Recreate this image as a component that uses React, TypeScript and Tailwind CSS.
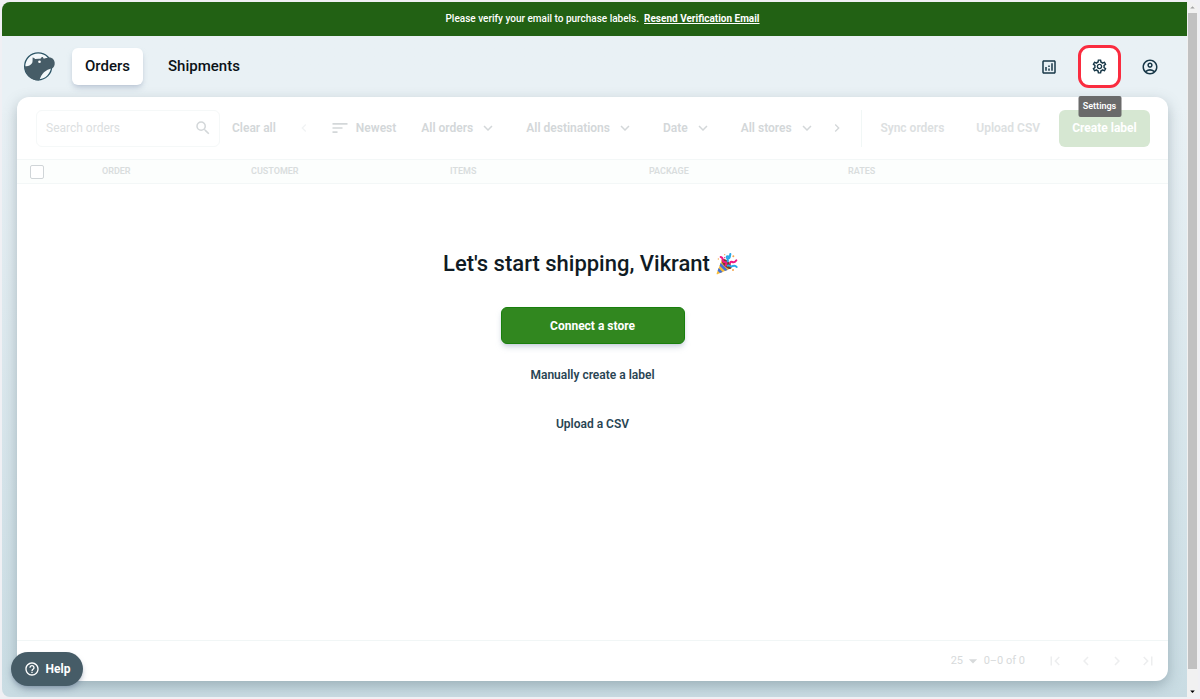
import type { ReactNode } from "react";
import {
  MdArrowDropDown,
  MdArrowDropUp,
  MdChevronLeft,
  MdChevronRight,
  MdFirstPage,
  MdHelpOutline,
  MdKeyboardArrowDown,
  MdLastPage,
  MdOutlineAccountCircle,
  MdOutlineAnalytics,
  MdOutlineSettings,
  MdSearch,
  MdSort,
} from "react-icons/md";

const filters = ["All orders", "All destinations", "Date", "All stores"];

const columns = [
  { label: "Order", width: "w-[149px]" },
  { label: "Customer", width: "w-[199px]" },
  { label: "Items", width: "w-[199px]" },
  { label: "Package", width: "w-[199px]" },
  { label: "Rates", width: "" },
];

function HippoLogo() {
  return (
    <svg viewBox="0 0 94 90" className="h-[30px] w-[31px]" aria-hidden="true">
      <circle cx="43" cy="43" r="41" fill="#f3f8fa" stroke="#2c5566" strokeWidth="4" />
      <path
        d="M2 43C8 43 17 42 23 35C27 31 26 25 26 16Q31 16 34 21Q43 19 50 20Q52 14 57 15L60 20C68 18 75 15 82 17C91 20 94 29 93 37C92 46 86 51 78 51C69 54 62 59 56 66C50 73 49 80 46 86C23 87 2 69 2 43Z"
        fill="#465c67"
      />
      <circle cx="47" cy="29" r="4" fill="#fff" />
    </svg>
  );
}

function PartyPopper() {
  return (
    <svg viewBox="0 0 66 66" className="h-[22px] w-[22px]" aria-hidden="true">
      <path d="M18 20L46 46L4 64Q1 65 2 61Z" fill="#fbbd37" />
      <path d="M14 29L35 51L27 54L11 38ZM8 45L20 57L12 60L5 53Z" fill="#4272d8" />
      <ellipse cx="32" cy="33" rx="9" ry="19" transform="rotate(-45 32 33)" fill="#713d2c" />
      <g fill="none" strokeWidth="6" strokeLinecap="round">
        <path d="M14 12Q20 13 20 20T27 27T29 38" stroke="#ee1982" />
        <path d="M35 25C39 20 29 15 33 10Q38 8 39 14T43 3" stroke="#2aa8e8" />
        <path d="M35 38C43 34 42 44 50 39Q58 36 62 42" stroke="#2aa8e8" />
        <path d="M42 31Q43 24 49 27T61 22" stroke="#ee1982" />
      </g>
      <g fill="#f5a64b">
        <circle cx="26" cy="5" r="2" />
        <circle cx="7" cy="18" r="2" />
        <circle cx="52" cy="10" r="3" />
        <circle cx="51" cy="51" r="3" />
      </g>
      <circle cx="26" cy="14" r="2" fill="#ee1982" />
    </svg>
  );
}

function IconButton({ label, children }: { label: string; children: ReactNode }) {
  return (
    <button type="button" aria-label={label} className="flex size-9 items-center justify-center">
      {children}
    </button>
  );
}

function Header() {
  return (
    <header className="flex h-[61px] shrink-0 items-center pr-[19px] pl-[22px]">
      <HippoLogo />
      <nav className="ml-[17px] flex items-center text-[15px] font-medium text-[#0b1218]">
        <a href="#orders" className="flex h-[37px] items-center rounded-md bg-white px-[13px] shadow-md shadow-slate-400/40">
          Orders
        </a>
        <a href="#shipments" className="ml-[25px]">
          Shipments
        </a>
      </nav>
      <div className="ml-auto flex items-center gap-[11px] text-[#173747]">
        <IconButton label="Analytics">
          <MdOutlineAnalytics className="size-[18px]" />
        </IconButton>
        <div className="relative">
          <button
            type="button"
            aria-label="Settings"
            className="flex size-[43px] items-center justify-center rounded-[11px] border-3 border-[#fa2c3f] bg-white"
          >
            <MdOutlineSettings className="size-[17px]" />
          </button>
          <span
            role="tooltip"
            className="absolute top-full left-1/2 z-10 mt-2 flex h-[21px] w-[43px] -translate-x-1/2 items-center justify-center rounded-xs bg-[#6a6a6a] text-[9px] font-semibold text-white"
          >
            Settings
          </span>
        </div>
        <IconButton label="Account">
          <MdOutlineAccountCircle className="size-[18px]" />
        </IconButton>
      </div>
    </header>
  );
}

function Toolbar() {
  return (
    <div className="flex h-[62px] shrink-0 items-center pr-[18px] pl-[19px] text-xs font-semibold whitespace-nowrap text-[#d3d7d9]">
      <label className="flex h-[37px] w-[184px] items-center rounded-md border border-[#f5f8f8] pr-[7px] pl-[9px]">
        <input
          type="text"
          aria-label="Search orders"
          placeholder="Search orders"
          className="min-w-0 flex-1 font-normal outline-none placeholder:text-[#dce0e1]"
        />
        <MdSearch className="size-[18px]" />
      </label>
      <button type="button" className="ml-3">Clear all</button>
      <MdChevronLeft className="ml-5 size-4 text-[#f1f3f4]" />
      <button type="button" className="ml-[18px] flex items-center gap-[6px]">
        <MdSort className="size-5" />
        Newest
      </button>
      <div className="ml-[25px] flex items-center gap-[29px]">
        {filters.map((filter) => (
          <button key={filter} type="button" className="flex items-center gap-[6px]">
            {filter}
            <MdKeyboardArrowDown className="size-[18px]" />
          </button>
        ))}
      </div>
      <MdChevronRight className="ml-[13px] size-4" />
      <div className="ml-auto flex h-[37px] items-center border-l border-[#f1f7f6] pl-[18px] text-[#dce0e1]">
        <button type="button">Sync orders</button>
        <button type="button" className="ml-8">Upload CSV</button>
        <button type="button" className="ml-[19px] h-[37px] w-[91px] rounded-md bg-[#d6e7d2] font-bold text-white">
          Create label
        </button>
      </div>
    </div>
  );
}

function OrdersTable() {
  return (
    <table className="w-full table-fixed text-left text-[9px] text-[#d9dddd]">
      <thead>
        <tr className="h-[24px] border-y border-[#f3f7f7] bg-[#fcfefd]">
          <th className="w-[85px] pl-[13px]">
            <input
              type="checkbox"
              aria-label="Select all orders"
              className="block size-[14px] appearance-none rounded-xs border border-[#d0d5d8] bg-white"
            />
          </th>
          {columns.map(({ label, width }) => (
            <th key={label} className={`${width} font-semibold uppercase`}>
              {label}
            </th>
          ))}
        </tr>
      </thead>
    </table>
  );
}

function EmptyState() {
  return (
    <div className="flex flex-1 flex-col items-center pt-[65px] text-xs font-semibold text-[#294553]">
      <h1 className="flex items-center gap-[6px] pr-1 text-[22px] leading-[30px] font-medium text-[#101b24]">
        Let's start shipping, Vikrant
        <PartyPopper />
      </h1>
      <button
        type="button"
        className="mt-7 h-[37px] w-[184px] rounded-md border border-[#197f0c] bg-[#31871f] font-bold text-white shadow-md shadow-slate-400/40"
      >
        Connect a store
      </button>
      <button type="button" className="mt-[23px]">Manually create a label</button>
      <button type="button" className="mt-[33px]">Upload a CSV</button>
    </div>
  );
}

function Pagination() {
  return (
    <div className="flex h-[41px] items-center justify-end border-t border-[#f1f6f6] pr-[11px] text-[11px] text-[#d7dadb]">
      <label className="relative flex items-center">
        <select aria-label="Rows per page" className="w-7 appearance-none outline-none">
          <option>25</option>
        </select>
        <MdArrowDropDown className="pointer-events-none absolute -right-1 size-5" />
      </label>
      <span className="ml-[5px]">0–0 of 0</span>
      <div className="ml-[21px] flex gap-[13px] text-[#edeeef]">
        <button type="button" aria-label="First page"><MdFirstPage className="size-[18px]" /></button>
        <button type="button" aria-label="Previous page"><MdChevronLeft className="size-[18px]" /></button>
        <button type="button" aria-label="Next page"><MdChevronRight className="size-[18px]" /></button>
        <button type="button" aria-label="Last page"><MdLastPage className="size-[18px]" /></button>
      </div>
    </div>
  );
}

export default function App() {
  return (
    <div className="h-screen bg-[#f0f0f4] p-[2px] font-['Roboto',sans-serif]">
      <div className="flex h-full overflow-hidden rounded-lg bg-[#f1f1f1]">
        <div className="relative flex min-w-0 flex-1 flex-col bg-linear-to-b from-[#e9f1f5] from-15% to-[#c9dce3]">
          <div className="flex h-[34px] shrink-0 items-center justify-center gap-[5px] bg-[#226114] pb-[2px] pl-4 text-[10px] font-medium text-white">
            Please verify your email to purchase labels.
            <a href="#verify" className="font-bold underline">Resend Verification Email</a>
          </div>
          <Header />
          <main className="mr-[19px] mb-4 ml-[15px] flex flex-1 flex-col rounded-xl bg-white shadow-[0_5px_14px_rgba(70,92,103,0.35)]">
            <Toolbar />
            <OrdersTable />
            <EmptyState />
            <Pagination />
          </main>
          <button
            type="button"
            className="absolute bottom-[11px] left-[9px] flex h-[34px] w-[72px] items-center justify-center gap-[6px] rounded-full bg-[#465c67] text-xs font-bold text-white shadow-md shadow-slate-500/40"
          >
            <MdHelpOutline className="size-4" />
            Help
          </button>
        </div>
        <div className="flex w-[11px] flex-col items-center text-black" aria-hidden="true">
          <MdArrowDropUp className="h-[11px] w-[11px] text-[#a3a3a3]" />
          <div className="mb-[17px] w-[9px] flex-1 bg-[#c1c1c1]" />
          <MdArrowDropDown className="h-[11px] w-[11px]" />
        </div>
      </div>
    </div>
  );
}
